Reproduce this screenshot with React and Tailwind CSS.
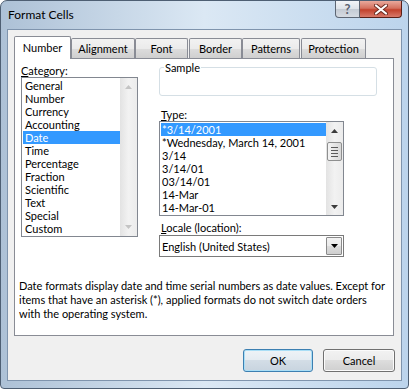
import React from "react";

const categories = [
  "General", "Number", "Currency", "Accounting", "Date", "Time",
  "Percentage", "Fraction", "Scientific", "Text", "Special", "Custom",
];
const types = [
  "*3/14/2001", "*Wednesday, March 14, 2001", "3/14", "3/14/01", "03/14/01", "14-Mar", "14-Mar-01",
];

function Arrow({ up, color }) {
  return (
    <svg width="7" height="4" viewBox="0 0 7 4">
      {up ? <path d="M0 4 L3.5 0 L7 4 Z" fill={color} /> : <path d="M0 0 L3.5 4 L7 0 Z" fill={color} />}
    </svg>
  );
}

function Tab({ label, selected, cls }) {
  if (selected) {
    return (
      <div className={"relative z-10 -mb-px h-[23px] bg-white border border-b-0 border-[#898c95] rounded-t-[2px] flex items-center justify-center pb-[2px] " + cls}>
        {label}
      </div>
    );
  }
  return (
    <div className={"h-[20px] border border-b-0 border-[#898c95] rounded-t-[2px] bg-[linear-gradient(#f2f2f2_0%,#ebebeb_50%,#dddddd_50%,#cfcfcf_100%)] flex items-center justify-center " + cls}>
      {label}
    </div>
  );
}

function CategoryList() {
  return (
    <div className="h-[160px] w-[117px] border border-[#828790] bg-white flex">
      <div className="flex-1 p-[1px] pr-0">
        {categories.map((c) => (
          <div
            key={c}
            className={
              c === "Date"
                ? "h-[13px] leading-[13px] pl-[2px] bg-[#3399ff] text-white"
                : "h-[13px] leading-[13px] pl-[2px]"
            }
          >
            {c}
          </div>
        ))}
      </div>
      <div className="w-[17px] bg-gradient-to-r from-[#e3e3e3] via-[#f2f2f2] to-[#ececec] flex flex-col items-center justify-between py-[7px]">
        <Arrow up color="#c4c4c4" />
        <Arrow color="#c4c4c4" />
      </div>
    </div>
  );
}

function TypeList() {
  return (
    <div className="h-[95px] w-[185px] border border-[#828790] bg-white flex">
      <div className="flex-1 p-[1px] pr-0">
        {types.map((t, i) => (
          <div
            key={t}
            className={
              i === 0
                ? "h-[13px] leading-[13px] pl-[1px] bg-[#3399ff] text-white"
                : "h-[13px] leading-[13px] pl-[1px]"
            }
          >
            {t}
          </div>
        ))}
      </div>
      <div className="w-[17px] bg-gradient-to-r from-[#e3e3e3] via-[#f2f2f2] to-[#ececec] flex flex-col items-center">
        <div className="h-[18px] flex items-center justify-center">
          <Arrow up color="#3c3c3c" />
        </div>
        <div className="mt-[2px] w-[15px] h-[19px] border border-[#8e8f8f] rounded-[2px] bg-gradient-to-r from-[#f4f4f4] to-[#d8d8d8] flex flex-col items-center justify-center gap-[2px]">
          <div className="w-[7px] h-px bg-[#5a5a5a]" />
          <div className="w-[7px] h-px bg-[#5a5a5a]" />
          <div className="w-[7px] h-px bg-[#5a5a5a]" />
          <div className="w-[7px] h-px bg-[#5a5a5a]" />
        </div>
        <div className="flex-1" />
        <div className="h-[17px] flex items-center justify-center">
          <Arrow color="#3c3c3c" />
        </div>
      </div>
    </div>
  );
}

export default function App() {
  return (
    <div className="w-[409px] h-[389px] bg-white font-['Lato',sans-serif] text-[11px] leading-[13px] text-black">
      <div className="w-full h-full rounded-t-[7px] rounded-b-[4px] border border-[#4e5f73] bg-gradient-to-r from-[#adc1d6] via-[#dbe8f4] to-[#bcd4ec] flex flex-col px-[6px] pb-[7px]">
        {/* title bar */}
        <div className="h-[28px] flex items-start justify-between">
          <div className="pl-[1px] pt-[7px] text-[12px]">Format Cells</div>
          <div className="flex">
            <div className="w-[25px] h-[17px] border border-[#5d6673] border-t-0 rounded-bl-[4px] bg-[linear-gradient(#f2f4f7_0%,#dde2e8_50%,#c3cad3_50%,#d6dbe2_100%)] flex items-center justify-center text-[13px] font-bold text-[#5a6270]">
              ?
            </div>
            <div className="w-[42px] h-[17px] border border-[#5a1f17] border-t-0 border-l-0 rounded-br-[4px] bg-[linear-gradient(#e9a99c_0%,#d4715f_45%,#c2412c_55%,#d8796a_100%)] flex items-center justify-center">
              <svg width="14" height="11" viewBox="0 0 14 11">
                <path d="M2 1.5 L12 9.5 M12 1.5 L2 9.5" stroke="#6b2a20" strokeWidth="4" strokeLinecap="round" />
                <path d="M2 1.5 L12 9.5 M12 1.5 L2 9.5" stroke="#ffffff" strokeWidth="2.2" strokeLinecap="round" />
              </svg>
            </div>
          </div>
        </div>

        {/* client area */}
        <div className="flex-1 border border-[#7f94ad] bg-[#f0f0f0] flex flex-col">
          <div className="ml-[6px] mt-[6px] w-[380px]">
            {/* tabs */}
            <div className="flex items-end h-[22px]">
              <Tab label="Number" selected cls="w-[57px]" />
              <Tab label="Alignment" cls="w-[64px]" />
              <Tab label="Font" cls="w-[53px]" />
              <Tab label="Border" cls="ml-[1px] w-[53px]" />
              <Tab label="Patterns" cls="w-[58px]" />
              <Tab label="Protection" cls="ml-[1px] w-[65px]" />
            </div>
            {/* panel */}
            <div className="h-[278px] border border-[#898c95] bg-white flex flex-col">
              <div className="flex pl-[6px]">
                <div className="w-[117px] pt-[5px]">
                  <div className="h-[13px]">
                    <span className="underline">C</span>ategory:
                  </div>
                  <CategoryList />
                </div>
                <div className="ml-[21px] w-[218px] pt-[2px]">
                  <fieldset className="h-[35px] border border-[#d5dfe5] rounded-[3px]">
                    <legend className="ml-[4px] px-[1px] leading-[13px]">Sample</legend>
                  </fieldset>
                  <div className="mt-[12px] h-[13px] pl-[2px]">
                    <span className="underline">T</span>ype:
                  </div>
                  <TypeList />
                  <div className="mt-[5px] h-[13px] pl-[2px]">
                    <span className="underline">L</span>ocale (location):
                  </div>
                  <div className="mt-[1px] w-[185px] h-[22px] border border-[#7a7a7a] bg-white flex items-center">
                    <div className="flex-1 pl-[2px]">English (United States)</div>
                    <div className="mr-[1px] w-[16px] h-[18px] border border-[#8a8a8a] rounded-[1px] bg-[linear-gradient(#f2f2f2_0%,#ebebeb_50%,#dddddd_50%,#cfcfcf_100%)] flex items-center justify-center">
                      <Arrow color="#000000" />
                    </div>
                  </div>
                </div>
              </div>
              <div className="mt-[22px] pl-[4px] leading-[14px] whitespace-nowrap">
                <div>Date formats display date and time serial numbers as date values. Except for</div>
                <div>items that have an asterisk (*), applied formats do not switch date orders</div>
                <div>with the operating system.</div>
              </div>
            </div>
          </div>
          {/* buttons */}
          <div className="mt-[13px] pr-[6px] flex justify-end gap-[10px]">
            <button className="w-[70px] h-[23px] border border-[#3c7fb1] rounded-[3px] bg-[linear-gradient(#eef3f7_0%,#e4ebf1_50%,#d3dde6_50%,#c8d4df_100%)] shadow-[inset_0_0_0_1px_#a9def6] leading-[13px]">
              OK
            </button>
            <button className="w-[72px] h-[23px] border border-[#707070] rounded-[3px] bg-[linear-gradient(#f2f2f2_0%,#ebebeb_50%,#dddddd_50%,#cfcfcf_100%)] shadow-[inset_0_0_0_1px_#fbfbfb] leading-[13px]">
              Cancel
            </button>
          </div>
        </div>
      </div>
    </div>
  );
}
